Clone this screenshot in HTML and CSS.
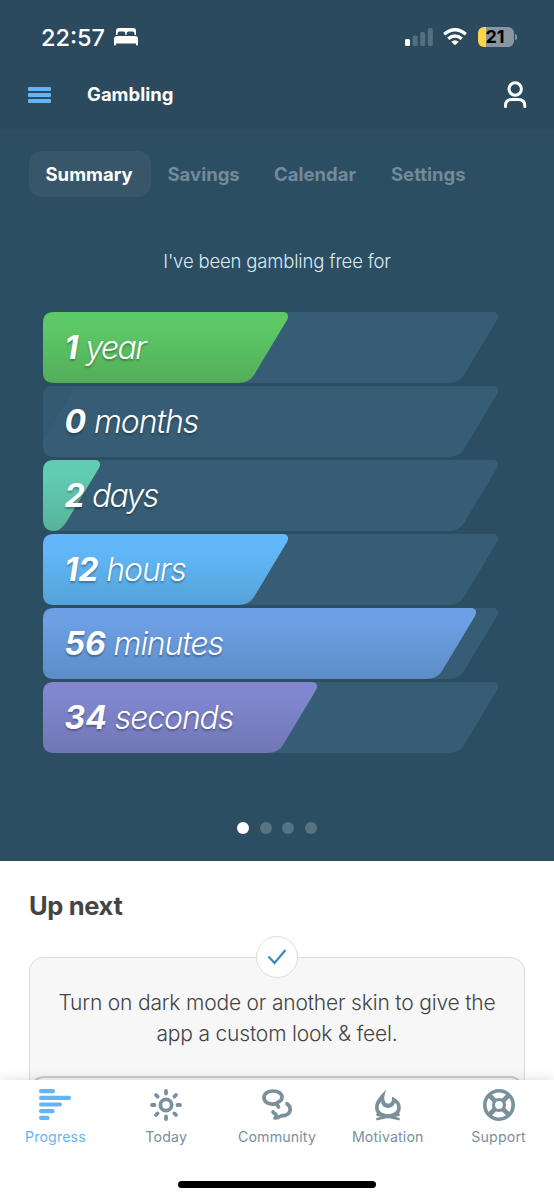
FILE: index.html
```
<!DOCTYPE html>
<html lang="en">
<head>
    <meta charset="UTF-8">
    <meta name="viewport" content="width=device-width, initial-scale=1.0">
    <title>Gambling</title>
    <link rel="stylesheet" href="styles.css">
</head>
<body>
    <div class="app">
        <div class="top">
            <div class="status">
                <span class="time">22:57</span>
                <svg class="bed" width="26" height="18" viewBox="0 0 26 18" fill="#fff">
                    <path d="M3 7V3Q3 0 6 0H20Q23 0 23 3V7H21.5V5.5Q21.5 3.5 19.5 3.5H15.5Q13.7 3.5 13.7 5.5V7H12.3V5.5Q12.3 3.5 10.5 3.5H6.5Q4.5 3.5 4.5 5.5V7Z"/>
                    <path d="M4 8H22Q25 8 25 11V16.5Q25 17.5 24 17.5T23 16.5V15.5H3V16.5Q3 17.5 2 17.5T1 16.5V11Q1 8 4 8Z"/>
                </svg>
                <svg class="signal" width="28" height="18" viewBox="0 0 28 18" fill="#54707f">
                    <rect x="0" y="11" width="5" height="7" rx="1.5" fill="#fff"/>
                    <rect x="7.6" y="7.5" width="5" height="10.5" rx="1.5"/>
                    <rect x="15.2" y="4" width="5" height="14" rx="1.5"/>
                    <rect x="22.8" y="0" width="5" height="18" rx="1.5"/>
                </svg>
                <svg class="wifi" width="24" height="18" viewBox="0 0 24 18" fill="none" stroke="#fff" stroke-width="3.4">
                    <path d="M1.2 6.2Q12 -2.8 22.8 6.2"/>
                    <path d="M5.2 10.8Q12 5 18.8 10.8"/>
                    <path d="M12 17.3L8.3 13.7Q12 10.6 15.7 13.7Z" fill="#fff" stroke="none"/>
                </svg>
                <div class="battery"><span>21</span></div>
            </div>
            <div class="header">
                <svg width="24" height="16" viewBox="0 0 24 16" fill="#64b5f6">
                    <rect width="23" height="4" y="0" rx="1"/>
                    <rect width="23" height="4" y="6" rx="1"/>
                    <rect width="23" height="4" y="12" rx="1"/>
                </svg>
                <h1>Gambling</h1>
                <svg class="user" width="24" height="30" viewBox="0 0 24 30" fill="none" stroke="#fff" stroke-width="3" stroke-linecap="round">
                    <circle cx="12.2" cy="9" r="6.2"/>
                    <path d="M2.5 26.5V25.5Q2.5 19.5 9 19.5H15.2Q21.8 19.5 21.8 25.5V26.5"/>
                </svg>
            </div>
        </div>

        <div class="hero">
            <div class="nav">
                <a class="active">Summary</a>
                <a>Savings</a>
                <a class="calendar">Calendar</a>
                <a>Settings</a>
            </div>
            <p class="intro">I've been gambling free for</p>

            <svg class="defs" width="0" height="0">
                <defs>
                    <linearGradient id="green" x2="0" y2="1"><stop offset=".2" stop-color="#5dc966"/><stop offset="1" stop-color="#53ad5a"/></linearGradient>
                    <linearGradient id="teal" x2="0" y2="1"><stop offset=".2" stop-color="#62ccb3"/><stop offset="1" stop-color="#55b49a"/></linearGradient>
                    <linearGradient id="blue" x2="0" y2="1"><stop offset=".2" stop-color="#62b8fa"/><stop offset="1" stop-color="#55a2d8"/></linearGradient>
                    <linearGradient id="indigo" x2="0" y2="1"><stop offset=".2" stop-color="#6c9fe4"/><stop offset="1" stop-color="#5d8cc7"/></linearGradient>
                    <linearGradient id="purple" x2="0" y2="1"><stop offset=".2" stop-color="#8187cf"/><stop offset="1" stop-color="#7176b5"/></linearGradient>
                    <path id="track" d="M11 0H450C454.5 0 456.5 3.5 454 8L421 63Q416 71 405 71H11Q0 71 0 60V11Q0 0 11 0Z" fill="#365d75"/>
                </defs>
            </svg>
            <div class="bars">
                <div class="bar">
                    <svg width="456" height="71"><use href="#track"/><path fill="url(#green)" d="M11 0H240C244.5 0 246.5 3.5 244 8L211 63Q206 71 195 71H11Q0 71 0 60V11Q0 0 11 0Z"/></svg>
                    <span class="short"><b>1</b> year</span>
                </div>
                <div class="bar">
                    <svg width="456" height="71"><use href="#track"/><path fill="#345a72" d="M11 0H24Q31 0 28 8L0 55V11Q0 0 11 0Z"/></svg>
                    <span><b>0</b> months</span>
                </div>
                <div class="bar">
                    <svg width="456" height="71"><use href="#track"/><path fill="url(#teal)" d="M11 0H52C56.5 0 58.5 3.5 56 8L24 61Q18 71 10 71Q0 70 0 60V11Q0 0 11 0Z"/></svg>
                    <span class="short"><b>2</b> days</span>
                </div>
                <div class="bar">
                    <svg width="456" height="71"><use href="#track"/><path fill="url(#blue)" d="M11 0H240C244.5 0 246.5 3.5 244 8L211 63Q206 71 195 71H11Q0 71 0 60V11Q0 0 11 0Z"/></svg>
                    <span><b>12</b> hours</span>
                </div>
                <div class="bar">
                    <svg width="456" height="71"><use href="#track"/><path fill="url(#indigo)" d="M11 0H428C432.5 0 434.5 3.5 432 8L399 63Q394 71 383 71H11Q0 71 0 60V11Q0 0 11 0Z"/></svg>
                    <span><b>56</b> minutes</span>
                </div>
                <div class="bar">
                    <svg width="456" height="71"><use href="#track"/><path fill="url(#purple)" d="M11 0H269C273.5 0 275.5 3.5 273 8L240 63Q235 71 224 71H11Q0 71 0 60V11Q0 0 11 0Z"/></svg>
                    <span><b>34</b> seconds</span>
                </div>
            </div>

            <div class="dots"><i class="on"></i><i></i><i></i><i></i></div>
        </div>

        <div class="next">
            <h2>Up next</h2>
            <div class="card">
                <div class="check">
                    <svg width="20" height="16" viewBox="0 0 20 16" fill="none" stroke="#3d8bbd" stroke-width="2.2">
                        <path d="M1.5 7.5L7.5 14L18.5 1"/>
                    </svg>
                </div>
                <p>Turn on dark mode or another skin to give the<br>app a custom look &amp; feel.</p>
                <div class="action"></div>
            </div>
        </div>

        <div class="tabbar">
            <div class="tabs">
                <a class="tab current">
                    <svg width="32" height="32" viewBox="0 0 32 32" fill="currentColor">
                        <rect y="0" width="16" height="4.2" rx="2"/>
                        <rect y="6.7" width="32" height="4.2" rx="2"/>
                        <rect y="13.4" width="23" height="4.2" rx="2"/>
                        <rect y="20" width="15.5" height="4.2" rx="2"/>
                        <rect y="26.7" width="10.5" height="4.2" rx="2"/>
                    </svg>
                    <span>Progress</span>
                </a>
                <a class="tab">
                    <svg width="32" height="32" viewBox="0 0 32 32" fill="none" stroke="currentColor" stroke-width="3.8" stroke-linecap="round">
                        <circle cx="16" cy="16" r="5.6"/>
                        <path d="M16 2V4.5M16 27.5V30M2 16H4.5M27.5 16H30M6 6L7.6 7.6M24.4 24.4L26 26M26 6L24.4 7.6M7.6 24.4L6 26"/>
                    </svg>
                    <span>Today</span>
                </a>
                <a class="tab">
                    <svg width="32" height="32" viewBox="0 0 32 32" fill="none" stroke="currentColor" stroke-width="3.7" stroke-linecap="round" stroke-linejoin="round">
                        <path d="M17.5 18L15.3 14.6C8 16.5 3 13 3 8.5C3 4.7 7 2 12 2C17.3 2 21 4.7 21 8.3C21 11.3 18.8 12.7 16 13.8"/>
                        <path d="M26 14.8C30.5 17.5 30.5 24 25 26C22.8 26.8 21 26.6 19.5 27.2C18 28.5 15.5 29 14 29C15.5 27.5 15.5 26.3 14.7 25.3C13.5 24.5 12.7 24 12 23"/>
                    </svg>
                    <span>Community</span>
                </a>
                <a class="tab">
                    <svg width="32" height="32" viewBox="0 0 32 32" fill="currentColor">
                        <path fill-rule="evenodd" d="M14.5 0C12.5 5 11.5 9.5 13 12.5C14 15 18 15.5 19.3 12.8C20.2 11 20 9.5 20 7.6C25 10.5 28.8 13 28.8 18.7C28.8 22.4 27 25.2 24.5 27H7.8C5 25.3 3 22.5 3 18.3C3 11 9.500 6 14.500 0ZM9.300 12.500C7.500 14.500 6.700 16 6.700 18.500C6.700 22.500 10.500 25 16 25C21.500 25 25.200 22.500 25.200 18.500C25.200 16.500 24.500 15 23 13.800C22 17.200 19.500 18.900 16.300 18.900C12 18.900 9.400 16.500 9.300 12.500Z"/>
                        <path d="M5.5 25.7L16 28L26.5 25.7" fill="none" stroke="currentColor" stroke-width="2.8" stroke-linecap="round"/>
                        <path d="M5.5 30L16 27.3L26.5 30" fill="none" stroke="currentColor" stroke-width="2.8" stroke-linecap="round"/>
                    </svg>
                    <span>Motivation</span>
                </a>
                <a class="tab">
                    <svg width="32" height="32" viewBox="0 0 32 32" fill="none" stroke="currentColor">
                        <circle cx="16" cy="16" r="14.2" stroke-width="3.6"/>
                        <circle cx="16" cy="16" r="5.5" stroke-width="3.2"/>
                        <path stroke-width="4.6" d="M6 6L12 12M20 20L26 26M26 6L20 12M12 20L6 26"/>
                    </svg>
                    <span>Support</span>
                </a>
            </div>
            <div class="home"></div>
        </div>
    </div>
</body>
</html>
```
FILE: styles.css
```
* {
    box-sizing: border-box;
}
body {
    margin: 0;
    font-family: Inter, "Liberation Sans", sans-serif;
    background: #fff;
}
svg {
    display: block;
    flex: none;
}
h1, h2, p {
    margin: 0;
}
.app {
    width: 554px;
    height: 1200px;
    display: flex;
    flex-direction: column;
    overflow: hidden;
}
.top {
    height: 130px;
    background: #2b4a5e;
    color: #fff;
}
.status {
    height: 74px;
    display: flex;
    align-items: center;
    padding: 0 40px 0 41px;
}
.time {
    width: 72px;
    font-size: 23.5px;
    font-weight: 550;
}
.signal {
    margin-left: auto;
}
.wifi {
    margin: 0 11px 0 10px;
}
.battery {
    position: relative;
    width: 36px;
    height: 20px;
    padding-right: 2px;
    border-radius: 6px;
    background: linear-gradient(90deg, #fbd549 8px, #8796a1 8px);
    color: #000;
    font-size: 18px;
    font-weight: 700;
    line-height: 20px;
    text-align: center;
}
.battery::after {
    content: "";
    position: absolute;
    right: -3px;
    top: 7px;
    width: 2px;
    height: 6px;
    border-radius: 0 2px 2px 0;
    background: #8796a1;
}
.header {
    height: 42px;
    display: flex;
    align-items: center;
    padding: 0 27px 0 28px;
}
h1 {
    margin: -2px 0 0 35px;
    font-size: 18.5px;
    font-weight: 650;
}
.user {
    margin-left: auto;
}
.hero {
    height: 731px;
    background: #2c4e62;
    color: #fff;
}
.nav {
    display: flex;
    padding: 21px 0 0 28.5px;
}
.nav a {
    width: 106.5px;
    height: 46px;
    line-height: 47px;
    font-size: 18.5px;
    font-weight: 650;
    color: #728a99;
}
.nav .active {
    width: 122px;
    margin-right: 17px;
    padding-left: 17px;
    border-radius: 13px;
    background: #37566a;
    color: #fff;
}
.nav .calendar {
    width: 117px;
}
.intro {
    padding-top: 51px;
    line-height: 26px;
    font-size: 18.5px;
    font-weight: 300;
    letter-spacing: -0.17px;
    color: #dce9f3;
    text-align: center;
}
.defs {
    position: absolute;
}
.bars {
    display: grid;
    gap: 3px;
    padding: 38px 0 0 42.5px;
}
.bar {
    display: grid;
    height: 71px;
}
.bar > * {
    grid-area: 1 / 1;
}
.bar span {
    padding-left: 22px;
    line-height: 71px;
    font-size: 32px;
    font-style: italic;
    font-weight: 300;
    letter-spacing: -1.1px;
    text-shadow: 0 2px 2px rgba(0, 0, 0, 0.3);
}
.bar .short {
    letter-spacing: -1.7px;
}
.bar b {
    font-weight: 750;
    letter-spacing: 0;
}
.dots {
    display: flex;
    gap: 10.7px;
    padding: 69px 0 0 237px;
}
.dots i {
    width: 12px;
    height: 12px;
    border-radius: 50%;
    background: #587384;
}
.dots .on {
    background: #fff;
}
.next {
    flex: 1;
    min-height: 0;
    padding: 29px 29px 0;
    color: #444;
}
h2 {
    line-height: 32px;
    font-size: 25.5px;
    font-weight: 650;
    letter-spacing: -0.35px;
}
.card {
    position: relative;
    height: 200px;
    margin-top: 35px;
    padding-top: 29px;
    border: 1px solid #dcddde;
    border-radius: 14px;
    background: #f7f7f7;
}
.card p {
    line-height: 31px;
    font-size: 21px;
    font-weight: 300;
    letter-spacing: -0.18px;
    text-align: center;
    white-space: nowrap;
}
.check {
    position: absolute;
    left: 226px;
    top: -22px;
    width: 42px;
    height: 42px;
    display: grid;
    place-items: center;
    border: 1px solid #dcddde;
    border-radius: 50%;
    background: #fff;
}
.action {
    height: 60px;
    margin: 27px 0 0;
    border: 2px solid #c5ccd3;
    border-radius: 14px;
}
.tabbar {
    position: relative;
    height: 120px;
    background: #fff;
    box-shadow: 0 0 12px rgba(0, 0, 0, 0.14);
}
.tabs {
    display: grid;
    grid-template-columns: repeat(5, 1fr);
    padding-top: 9px;
}
.tab {
    display: flex;
    flex-direction: column;
    align-items: center;
    color: #7b909d;
}
.tab span {
    margin-top: 6px;
    line-height: 20px;
    font-size: 14.2px;
    letter-spacing: 0.15px;
}
.current {
    color: #64b5f6;
}
.home {
    width: 198px;
    height: 7px;
    margin: 34px auto 0;
    border-radius: 4px;
    background: #000;
}
```
